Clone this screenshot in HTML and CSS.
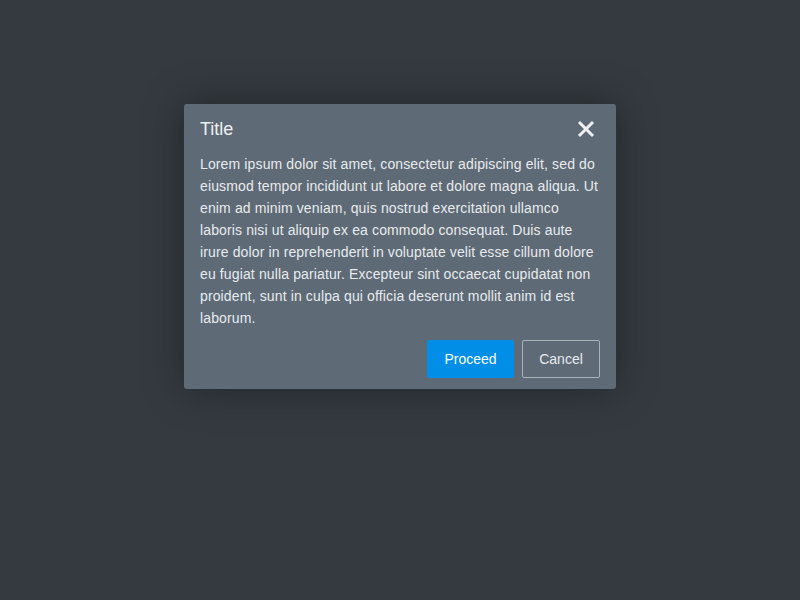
FILE: index.html
```html
<!DOCTYPE html>
<html>
<head>
<meta charset="utf-8">
<link rel="stylesheet" href="styles.css">
</head>
<body>
<div class="stage">
  <div class="dialog">
    <div class="dialog-header">
      <div class="dialog-title">Title</div>
      <button class="close" aria-label="Close">
        <svg width="18" height="18" viewBox="0 0 18 18"><path d="M2 2L16 16M16 2L2 16" stroke="#eef0f2" stroke-width="3" stroke-linecap="butt"/></svg>
      </button>
    </div>
    <div class="dialog-body">Lorem ipsum dolor sit amet, consectetur adipiscing elit, sed do eiusmod tempor incididunt ut labore et dolore magna aliqua. Ut enim ad minim veniam, quis nostrud exercitation ullamco laboris nisi ut aliquip ex ea commodo consequat. Duis aute irure dolor in reprehenderit in voluptate velit esse cillum dolore eu fugiat nulla pariatur. Excepteur sint occaecat cupidatat non proident, sunt in culpa qui officia deserunt mollit anim id est laborum.</div>
    <div class="dialog-footer">
      <button class="btn btn-primary">Proceed</button>
      <button class="btn btn-secondary">Cancel</button>
    </div>
  </div>
</div>
</body>
</html>
```
FILE: styles.css
```css
html, body {
  margin: 0;
  padding: 0;
  background: #343a40;
  font-family: "Liberation Sans", Arial, sans-serif;
}
.stage {
  width: 800px;
  height: 600px;
  display: flex;
  justify-content: center;
  align-items: flex-start;
  padding-top: 104px;
  box-sizing: border-box;
}
.dialog {
  width: 432px;
  box-sizing: border-box;
  background: #5e6b77;
  border-radius: 3px;
  padding: 12px 16px 11px;
  box-shadow: 0 0 40px rgba(0, 0, 0, 0.35);
  color: #eceef0;
}
.dialog-header {
  height: 25px;
  display: flex;
  align-items: center;
  justify-content: space-between;
}
.dialog-title {
  font-size: 18px;
  line-height: 24px;
  color: #eceef0;
}
.close {
  background: none;
  border: none;
  padding: 0;
  margin-right: 5px;
  width: 18px;
  height: 18px;
  display: flex;
  cursor: pointer;
}
.dialog-body {
  margin-top: 12px;
  font-size: 14px;
  line-height: 22px;
  letter-spacing: 0.13px;
  color: #e8eaec;
}
.dialog-footer {
  margin-top: 11px;
  display: flex;
  justify-content: flex-end;
  gap: 8px;
}
.btn {
  height: 38px;
  font-family: "Liberation Sans", Arial, sans-serif;
  font-size: 14px;
  border-radius: 2px;
  padding: 0 16px;
  box-sizing: border-box;
  cursor: pointer;
}
.btn-primary {
  width: 87px;
  background: #008ee6;
  border: 1px solid #008ee6;
  color: #ffffff;
}
.btn-secondary {
  width: 78px;
  background: transparent;
  border: 1px solid #aab2ba;
  color: #e8eaec;
}
```
